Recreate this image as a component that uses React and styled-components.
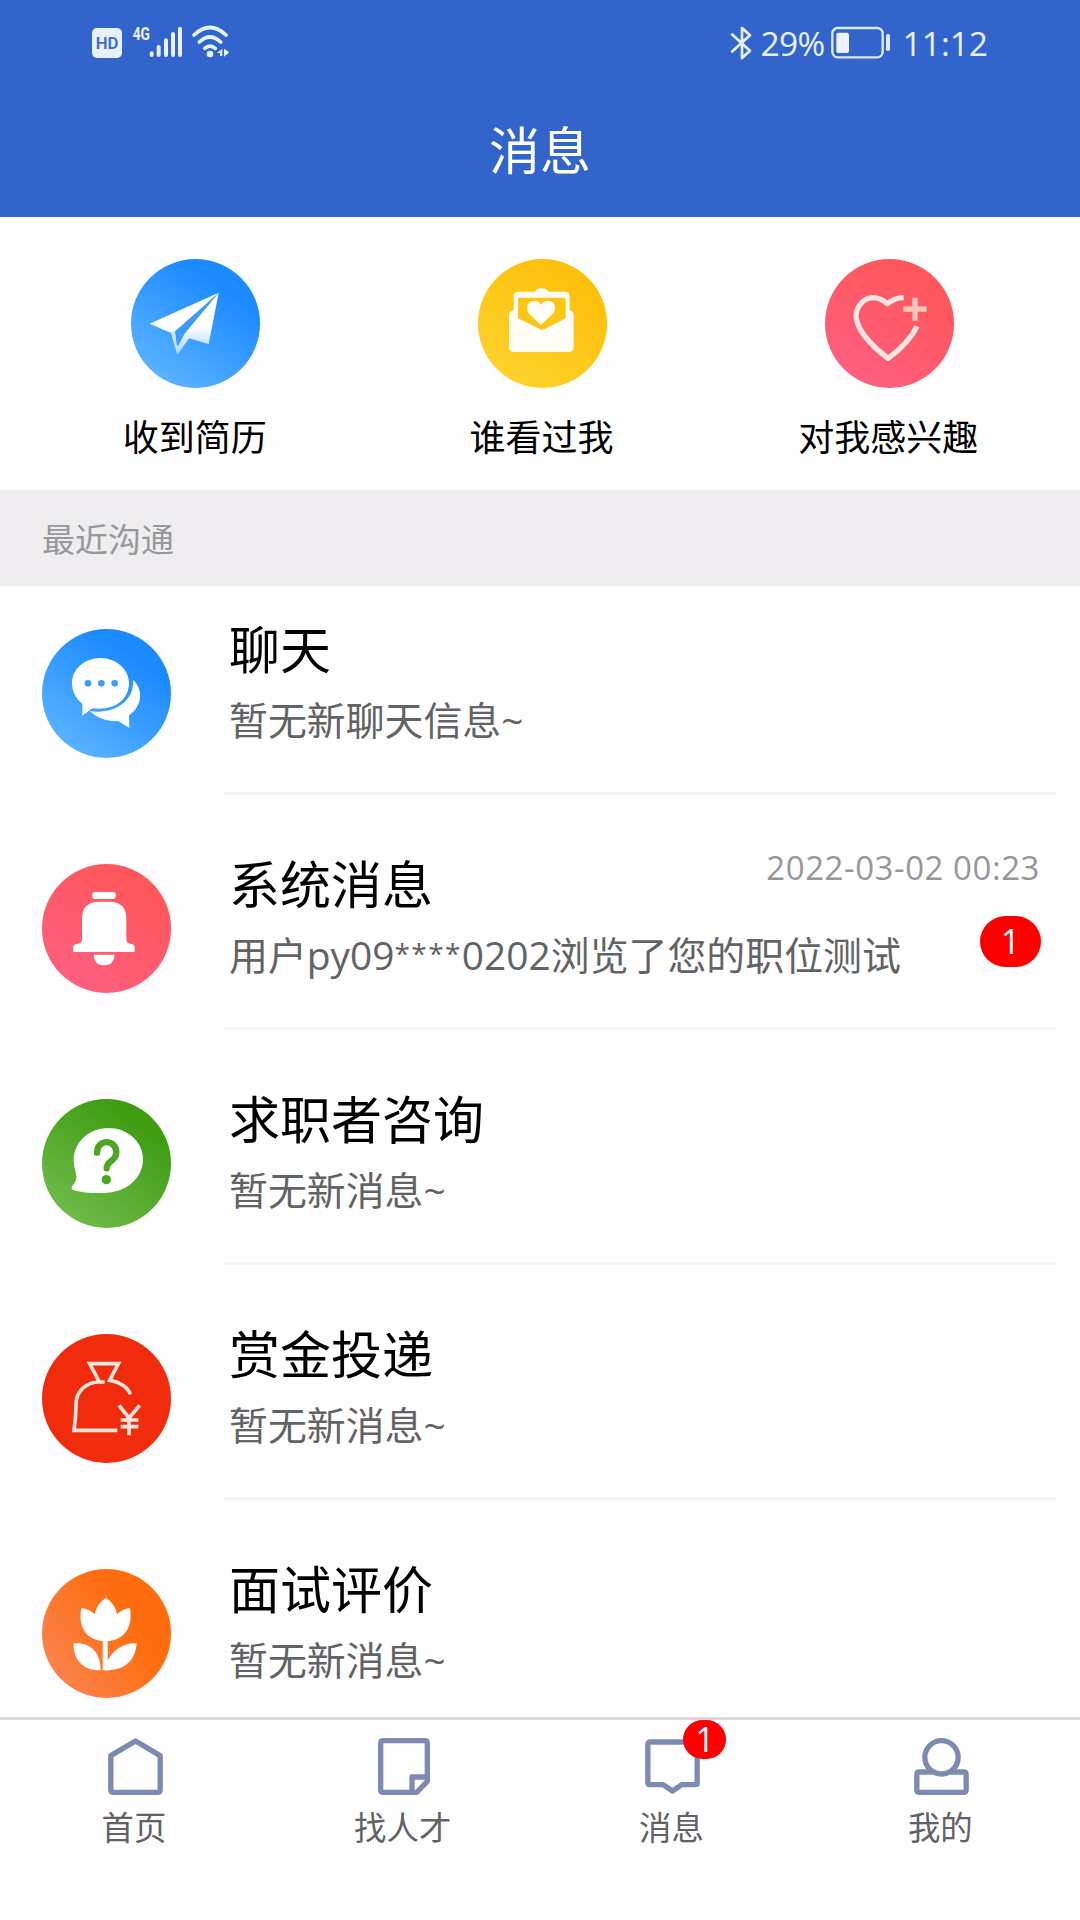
import React from 'react';
import styled, { createGlobalStyle } from 'styled-components';

const GlobalStyle = createGlobalStyle`
  * {
    box-sizing: border-box;
  }

  body {
    margin: 0;
    background: #fefefe;
    font-family: 'Open Sans', 'Noto Sans CJK SC', sans-serif;
  }
`;

const Page = styled.div`
  display: flex;
  flex-direction: column;
  width: 1080px;
  height: 1920px;
  overflow: hidden;
  background: #fefefe;
`;

const Header = styled.header`
  height: 217px;
  flex: none;
  background: #3265cb;
  color: #fff;
`;

const StatusBar = styled.div`
  display: flex;
  justify-content: space-between;
  height: 85px;
  padding: 0 92px 0 91px;
  color: #e9f0ff;
`;

const StatusGroup = styled.div`
  display: flex;
  align-items: center;
`;

const StatusText = styled.span`
  margin: 0 ${({ $after }) => $after || 0}px 0 ${({ $before }) => $before}px;
  font-size: 33.5px;
  line-height: 86px;
  letter-spacing: ${({ $spacing }) => $spacing || 0}px;
  white-space: nowrap;
`;

const PageTitle = styled.h1`
  margin: 0;
  font-size: 51px;
  font-weight: 400;
  line-height: 130px;
  text-align: center;
`;

const Shortcuts = styled.section`
  display: grid;
  grid-template-columns: repeat(3, 346.7px);
  justify-content: center;
  flex: none;
  height: 273px;
  padding: 42px 0 0 5px;
`;

const Shortcut = styled.div`
  display: flex;
  flex-direction: column;
  align-items: center;
`;

const ShortcutLabel = styled.span`
  margin: 25px 2px 0 0;
  font-size: 36px;
  line-height: 50px;
  color: #000;
`;

const SectionTitle = styled.h2`
  flex: none;
  margin: 0;
  height: 96px;
  padding-left: 42px;
  background: #efedf0;
  color: #98979a;
  font-size: 33px;
  font-weight: 400;
  line-height: 99px;
`;

const Circle = styled.div`
  flex: none;
  width: 129px;
  height: 129px;
  border-radius: 50%;
  background: ${({ $fill }) => $fill};

  svg {
    display: block;
    width: 129px;
    height: 129px;
  }
`;

const List = styled.main`
  flex: none;
  height: 1131px;
  overflow: hidden;
`;

const Row = styled.article`
  display: flex;
  height: 209px;
  margin-bottom: 26px;
  padding-left: 42px;
`;

const RowIcon = styled.div`
  padding-top: 43px;
`;

const RowBody = styled.div`
  width: 832px;
  margin-left: 53px;
  padding: 28px 15px 0 5px;
  border-bottom: 3px solid #f4f4f9;
`;

const RowLine = styled.div`
  display: flex;
  justify-content: space-between;
  align-items: flex-start;
  height: 70px;
`;

const RowTitle = styled.h3`
  margin: 0;
  font-size: 51px;
  font-weight: 400;
  line-height: 71px;
  color: #000;
`;

const RowText = styled.p`
  margin: 0;
  font-size: 38.9px;
  line-height: 71px;
  color: #626365;
  white-space: nowrap;
`;

const Mask = styled.span`
  font-size: 28px;
  line-height: 0;
  letter-spacing: 1.4px;
  vertical-align: 6px;
`;

const Time = styled.time`
  margin-right: 1px;
  font-size: 33px;
  line-height: 38px;
  letter-spacing: 0.55px;
  color: #97979a;
  white-space: nowrap;
`;

const CountBadge = styled.span`
  width: 61px;
  height: 51px;
  margin-top: -3px;
  border-radius: 26px;
  background: #fe0000;
  color: #fff;
  font-size: 34px;
  line-height: 50px;
  text-align: center;
`;

const TabBar = styled.nav`
  display: grid;
  grid-template-columns: repeat(4, 268.8px);
  flex: 1;
  border-top: 3px solid #dcdade;
  background: #fefefe;
`;

const Tab = styled.div`
  display: flex;
  flex-direction: column;
  align-items: center;
  padding-top: 18px;
`;

const TabIcon = styled.div`
  position: relative;
  height: 57px;
  left: 1px;

  svg {
    display: block;
    fill: none;
    stroke: #7f8ab2;
    stroke-width: 16;
    stroke-linejoin: round;
  }
`;

const TabBadge = styled.span`
  position: absolute;
  top: -18px;
  left: 38px;
  width: 43px;
  height: 39px;
  border-radius: 20px;
  background: #fe0000;
  color: #fff;
  font-size: 34px;
  line-height: 38px;
  text-align: center;
`;

const TabLabel = styled.span`
  margin: 7px 1px 0 0;
  font-size: 32.4px;
  line-height: 50px;
  color: #626264;
`;

const PlaneIcon = () => (
  <svg viewBox="0 0 387 387">
    <defs>
      <linearGradient id="tail" x1="0" y1="0" x2="0" y2="1">
        <stop offset="0.55" stopColor="#fff" />
        <stop offset="1" stopColor="#9fd2ff" />
      </linearGradient>
    </defs>
    <path fill="#fff" d="M56 194 263 101 134 217 119 221Z" />
    <path fill="#c9e5ff" d="M119 219 133 216 141 262 139 288Z" />
    <path fill="url(#tail)" d="M263 101 233 255 174 238 139 288 141 262 160 224Z" />
    <path fill="#3c9cfb" d="M257 108 132 217 138 262 162 222Z" />
  </svg>
);

const EnvelopeIcon = () => (
  <svg viewBox="0 0 387 387">
    <path
      fill="#fffdf6"
      d="M107 153V112Q107 98 121 98H170Q178 88 191 88T211 98H261Q275 98 275 112V153Q287 158 287 166V263Q287 279 271 279H109Q93 279 93 263V166Q93 158 107 153Z"
    />
    <path fill="#fdc616" d="M124 116H258Q263 116 263 122V178L193 214 120 178V122Q120 116 124 116Z" />
    <path
      fill="#fffdf6"
      d="M189 198 152 163Q143 148 150 135C160 122 180 122 189 137C198 122 218 122 228 135Q235 148 226 163Z"
    />
  </svg>
);

const HeartPlusIcon = () => (
  <svg viewBox="0 0 387 387" fill="none" strokeWidth="16">
    <path
      stroke="#ffe5e2"
      strokeLinejoin="round"
      d="M236 116C215 116 205 122 186 134C170 119 157 116 144 116C116 117 93 143 93 171C95 211 132 254 189 298C230 268 259 237 276 202"
    />
    <path stroke="#ffc3bd" d="M235 150H305M270 116V185" />
  </svg>
);

const ChatIcon = () => (
  <svg viewBox="0 0 387 387">
    <path
      fill="#fff"
      d="M175 87C128 87 90 121 90 162C90 187 102 209 121 224V260L151 238C219 246 261 211 261 162C261 121 222 87 175 87Z"
    />
    <path
      fill="#fff"
      d="M273 153C301 176 306 228 261 259L262 297 228 276C195 279 164 265 143 246C214 257 277 219 273 153Z"
    />
    <g fill="#3c9cfb">
      <circle cx="138" cy="163" r="10" />
      <circle cx="178" cy="163" r="10" />
      <circle cx="218" cy="163" r="10" />
    </g>
  </svg>
);

const BellIcon = () => (
  <svg viewBox="0 0 387 387" fill="#fff">
    <rect x="151" y="84" width="70" height="21" rx="8" />
    <path d="M120 165Q120 113 172 113H201Q253 113 253 165V226Q253 239 269 240Q278 241 278 252V264H93V252Q93 241 104 240Q120 239 120 226Z" />
    <path d="M155 272H218Q216 304 186 304T155 272Z" />
  </svg>
);

const QuestionIcon = () => (
  <svg viewBox="0 0 387 387">
    <path
      fill="#fff"
      d="M199 87C140 87 95 131 95 184Q95 203 101 220C106 238 101 251 90 262Q86 270 95 274C122 282 158 283 182 282C258 282 303 234 303 181C303 127 255 87 199 87Z"
    />
    <path
      fill="none"
      stroke="#4ba722"
      strokeWidth="19"
      strokeLinecap="round"
      d="M165 161C165 119 223 119 223 161C223 187 194 183 194 208"
    />
    <circle cx="193" cy="242" r="14" fill="#4ba722" />
  </svg>
);

const BagIcon = () => (
  <svg viewBox="0 0 387 387" fill="none" stroke="#ffe6dc" strokeWidth="11">
    <path d="M188 144H168C130 146 102 174 102 210Q102 250 96 289H226" />
    <path d="M172 144 143 89H229L203 139C231 143 257 158 265 181" />
    <path d="M231 214 261 252 293 214M261 250V304M236 258H289M236 278H289" />
  </svg>
);

const FlowerIcon = () => (
  <svg viewBox="0 0 387 387" fill="#fff">
    <path d="M192 86Q220 105 225 136Q240 120 264 117C272 165 256 208 203 216H178C126 208 108 165 118 117Q141 119 158 136Q163 105 192 86Z" />
    <path d="M182 210H197V275C210 245 247 219 284 223C280 276 248 307 182 304Z" />
    <path d="M95 223C143 219 176 248 176 304C124 306 93 273 95 223Z" />
  </svg>
);

const HomeIcon = () => (
  <svg width="55" height="57" viewBox="0 0 164 171">
    <path d="M8 53 82 9 156 53V155Q156 163 148 163H16Q8 163 8 155Z" />
  </svg>
);

const NoteIcon = () => (
  <svg width="52" height="57" viewBox="0 0 156 171">
    <path d="M16 8H140Q148 8 148 16V130L116 163H16Q8 163 8 155V16Q8 8 16 8Z" />
    <path d="M102 160V117H148" />
  </svg>
);

const MessageIcon = () => (
  <svg width="55" height="57" viewBox="0 0 164 171">
    <path d="M16 12H148Q156 12 156 20V138Q156 140 148 140H110L82 159 54 140H16Q8 140 8 134V20Q8 12 16 12Z" />
  </svg>
);

const PersonIcon = () => (
  <svg width="55" height="57" viewBox="0 0 164 171">
    <circle cx="82" cy="58" r="50" />
    <path d="M56 102H16Q8 102 8 110V155Q8 163 16 163H148Q156 163 156 155V110Q156 102 148 102H108" />
  </svg>
);

const NetworkIcons = () => (
  <svg width="150" height="85" viewBox="0 0 450 255">
    <rect x="3" y="84" width="90" height="90" rx="15" fill="#e9f0ff" />
    <text x="48" y="148" fontSize="52" fontWeight="600" fontFamily="Roboto" textAnchor="middle" fill="#3c6bc8" textLength="68" lengthAdjust="spacingAndGlyphs">
      HD
    </text>
    <text x="125" y="121" fontSize="55" fontWeight="700" fontFamily="Roboto" fill="#e9f0ff" textLength="52" lengthAdjust="spacingAndGlyphs">
      4G
    </text>
    <g stroke="#e9f0ff" strokeWidth="12" strokeLinecap="round" fill="none">
      <path d="M182 160V165M203 141V165M225 121V165M246 102V165M267 86V165" />
      <path strokeWidth="11" d="M309 105Q357 60 405 105M325 126Q357 96 389 126M341 145Q357 132 373 145" />
    </g>
    <circle cx="357" cy="162" r="10" fill="#e9f0ff" />
    <path fill="#e9f0ff" d="M378 159 394 146V168H387V159ZM399 146 415 157 399 170Z" />
  </svg>
);

const BluetoothIcon = () => (
  <svg width="22" height="36" viewBox="0 0 66 108" fill="none" stroke="#e9f0ff" strokeWidth="8">
    <path d="M4 26 60 77 36 99V9L60 31 4 82" strokeLinejoin="round" />
  </svg>
);

const BatteryIcon = () => (
  <svg width="60" height="33" viewBox="0 0 180 99">
    <rect x="4" y="6" width="151" height="88" rx="16" fill="none" stroke="#dfe9ff" strokeWidth="7" />
    <rect x="16" y="20" width="38" height="61" rx="6" fill="#eef4ff" />
    <rect x="165" y="24" width="12" height="51" rx="5" fill="#dfe9ff" />
  </svg>
);

const blue = 'linear-gradient(215deg, #1c8aff 25%, #5fb6ff 92%)';
const pink = 'linear-gradient(215deg, #ff575c 20%, #ff6083 95%)';

const shortcuts = [
  { label: '收到简历', icon: <PlaneIcon />, fill: blue },
  { label: '谁看过我', icon: <EnvelopeIcon />, fill: 'linear-gradient(215deg, #fdc00c 20%, #fdd42e 95%)' },
  { label: '对我感兴趣', icon: <HeartPlusIcon />, fill: pink },
];

const rows = [
  { title: '聊天', text: '暂无新聊天信息~', icon: <ChatIcon />, fill: blue },
  {
    title: '系统消息',
    text: (
      <>
        用户py09<Mask>****</Mask>0202浏览了您的职位测试
      </>
    ),
    icon: <BellIcon />,
    fill: pink,
    time: '2022-03-02 00:23',
    count: 1,
  },
  { title: '求职者咨询', text: '暂无新消息~', icon: <QuestionIcon />, fill: 'linear-gradient(215deg, #3f9d12 22%, #74be50 95%)' },
  { title: '赏金投递', text: '暂无新消息~', icon: <BagIcon />, fill: '#f02c0c' },
  { title: '面试评价', text: '暂无新消息~', icon: <FlowerIcon />, fill: 'linear-gradient(235deg, #ff6d0e 35%, #f98657 95%)' },
];

const tabs = [
  { label: '首页', icon: <HomeIcon /> },
  { label: '找人才', icon: <NoteIcon /> },
  { label: '消息', icon: <MessageIcon />, count: 1 },
  { label: '我的', icon: <PersonIcon /> },
];

const App = () => (
  <Page>
    <GlobalStyle />
    <Header>
      <StatusBar>
        <StatusGroup>
          <NetworkIcons />
        </StatusGroup>
        <StatusGroup>
          <BluetoothIcon />
          <StatusText $before={8} $after={6} $spacing={-0.6}>29%</StatusText>
          <BatteryIcon />
          <StatusText $before={12}>11:12</StatusText>
        </StatusGroup>
      </StatusBar>
      <PageTitle>消息</PageTitle>
    </Header>
    <Shortcuts>
      {shortcuts.map(({ label, icon, fill }) => (
        <Shortcut key={label}>
          <Circle $fill={fill}>{icon}</Circle>
          <ShortcutLabel>{label}</ShortcutLabel>
        </Shortcut>
      ))}
    </Shortcuts>
    <SectionTitle>最近沟通</SectionTitle>
    <List>
      {rows.map(({ title, text, icon, fill, time, count }) => (
        <Row key={title}>
          <RowIcon>
            <Circle $fill={fill}>{icon}</Circle>
          </RowIcon>
          <RowBody>
            <RowLine>
              <RowTitle>{title}</RowTitle>
              {time && <Time>{time}</Time>}
            </RowLine>
            <RowLine>
              <RowText>{text}</RowText>
              {count && <CountBadge>{count}</CountBadge>}
            </RowLine>
          </RowBody>
        </Row>
      ))}
    </List>
    <TabBar>
      {tabs.map(({ label, icon, count }) => (
        <Tab key={label}>
          <TabIcon>
            {icon}
            {count && <TabBadge>{count}</TabBadge>}
          </TabIcon>
          <TabLabel>{label}</TabLabel>
        </Tab>
      ))}
    </TabBar>
  </Page>
);

export default App;
